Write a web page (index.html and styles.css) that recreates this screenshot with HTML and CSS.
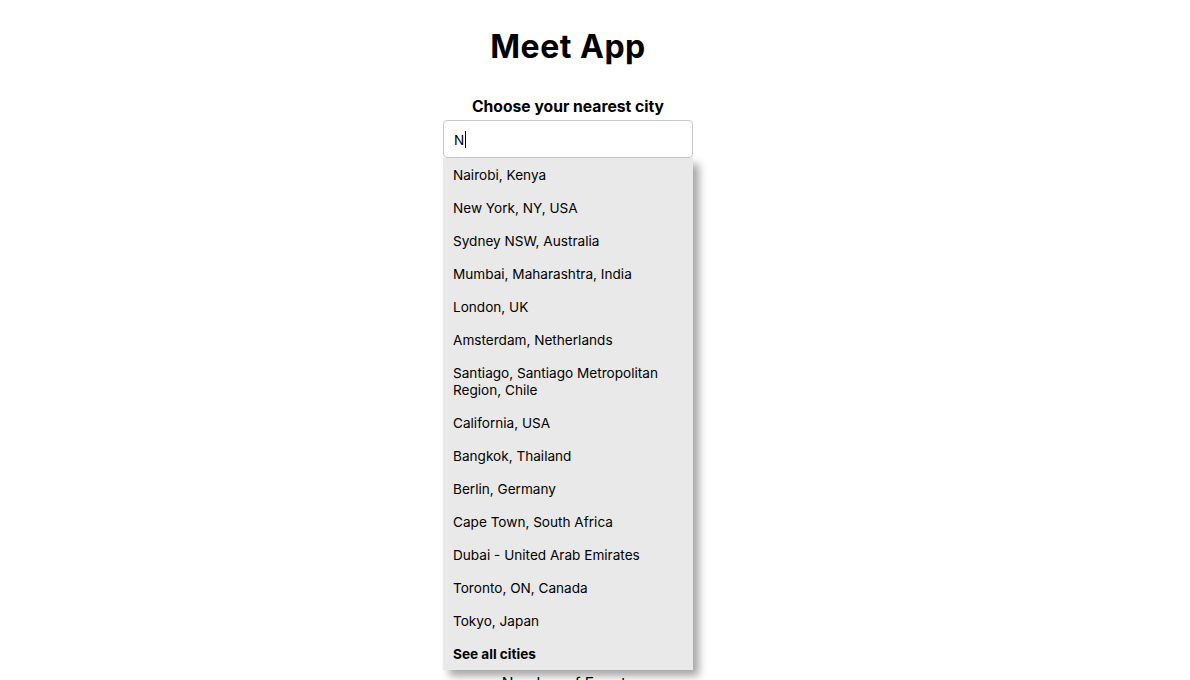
FILE: index.html
```html
<!DOCTYPE html>
<html>
<head>
<meta charset="utf-8">
<link rel="stylesheet" href="styles.css">
</head>
<body>
<div class="app">
  <h1 class="title">Meet App</h1>
  <div class="city-search">
    <label class="label">Choose your nearest city</label>
    <div class="input-wrap">
      <div class="input"><span class="value">N</span><span class="caret"></span></div>
      <ul class="suggestions">
        <li>Nairobi, Kenya</li>
        <li>New York, NY, USA</li>
        <li>Sydney NSW, Australia</li>
        <li>Mumbai, Maharashtra, India</li>
        <li>London, UK</li>
        <li>Amsterdam, Netherlands</li>
        <li>Santiago, Santiago Metropolitan Region, Chile</li>
        <li>California, USA</li>
        <li>Bangkok, Thailand</li>
        <li>Berlin, Germany</li>
        <li>Cape Town, South Africa</li>
        <li>Dubai - United Arab Emirates</li>
        <li>Toronto, ON, Canada</li>
        <li>Tokyo, Japan</li>
        <li class="all"><b>See all cities</b></li>
      </ul>
    </div>
  </div>
  <div class="number-events">
    <label class="events-label">Number of Events</label>
  </div>
</div>
</body>
</html>
```

FILE: styles.css
```css
html, body {
  margin: 0;
  padding: 0;
  background: #fff;
}
body {
  font-family: Inter, "Liberation Sans", sans-serif;
  color: #000;
}
.app {
  padding-right: 54px;
  display: flex;
  flex-direction: column;
  align-items: center;
  text-align: center;
}
.title {
  font-size: 32px;
  font-weight: 700;
  letter-spacing: 0.5px;
  margin: 27px 0 0 0;
  line-height: 40px;
}
.city-search {
  margin-top: 29px;
  display: flex;
  flex-direction: column;
  align-items: center;
}
.label {
  font-size: 15.7px;
  font-weight: 700;
  line-height: 20px;
  padding-top: 1px;
  margin-bottom: 3px;
}
.input-wrap {
  position: relative;
  width: 250px;
}
.input {
  box-sizing: border-box;
  width: 250px;
  height: 38px;
  border: 1px solid #c8c8c8;
  border-radius: 4px;
  display: flex;
  align-items: center;
  padding-left: 10px;
  padding-top: 1px;
  font-size: 13.6px;
  text-align: left;
}
.caret {
  display: inline-block;
  width: 1px;
  height: 17px;
  background: #000;
  margin-left: 1px;
}
.suggestions {
  position: absolute;
  top: 38px;
  left: 0;
  width: 250px;
  margin: 0;
  padding: 0;
  list-style: none;
  background: #e9e9e9;
  box-shadow: 6px 6px 8px rgba(0, 0, 0, 0.35);
  text-align: left;
  z-index: 2;
}
.suggestions li {
  padding: 9px 10px 7px;
  font-size: 13.6px;
  line-height: 17px;
}
.suggestions li.all b {
  font-weight: 700;
}
.number-events {
  margin-top: 515px;
}
.events-label {
  font-size: 15.6px;
  line-height: 20px;
}
```
